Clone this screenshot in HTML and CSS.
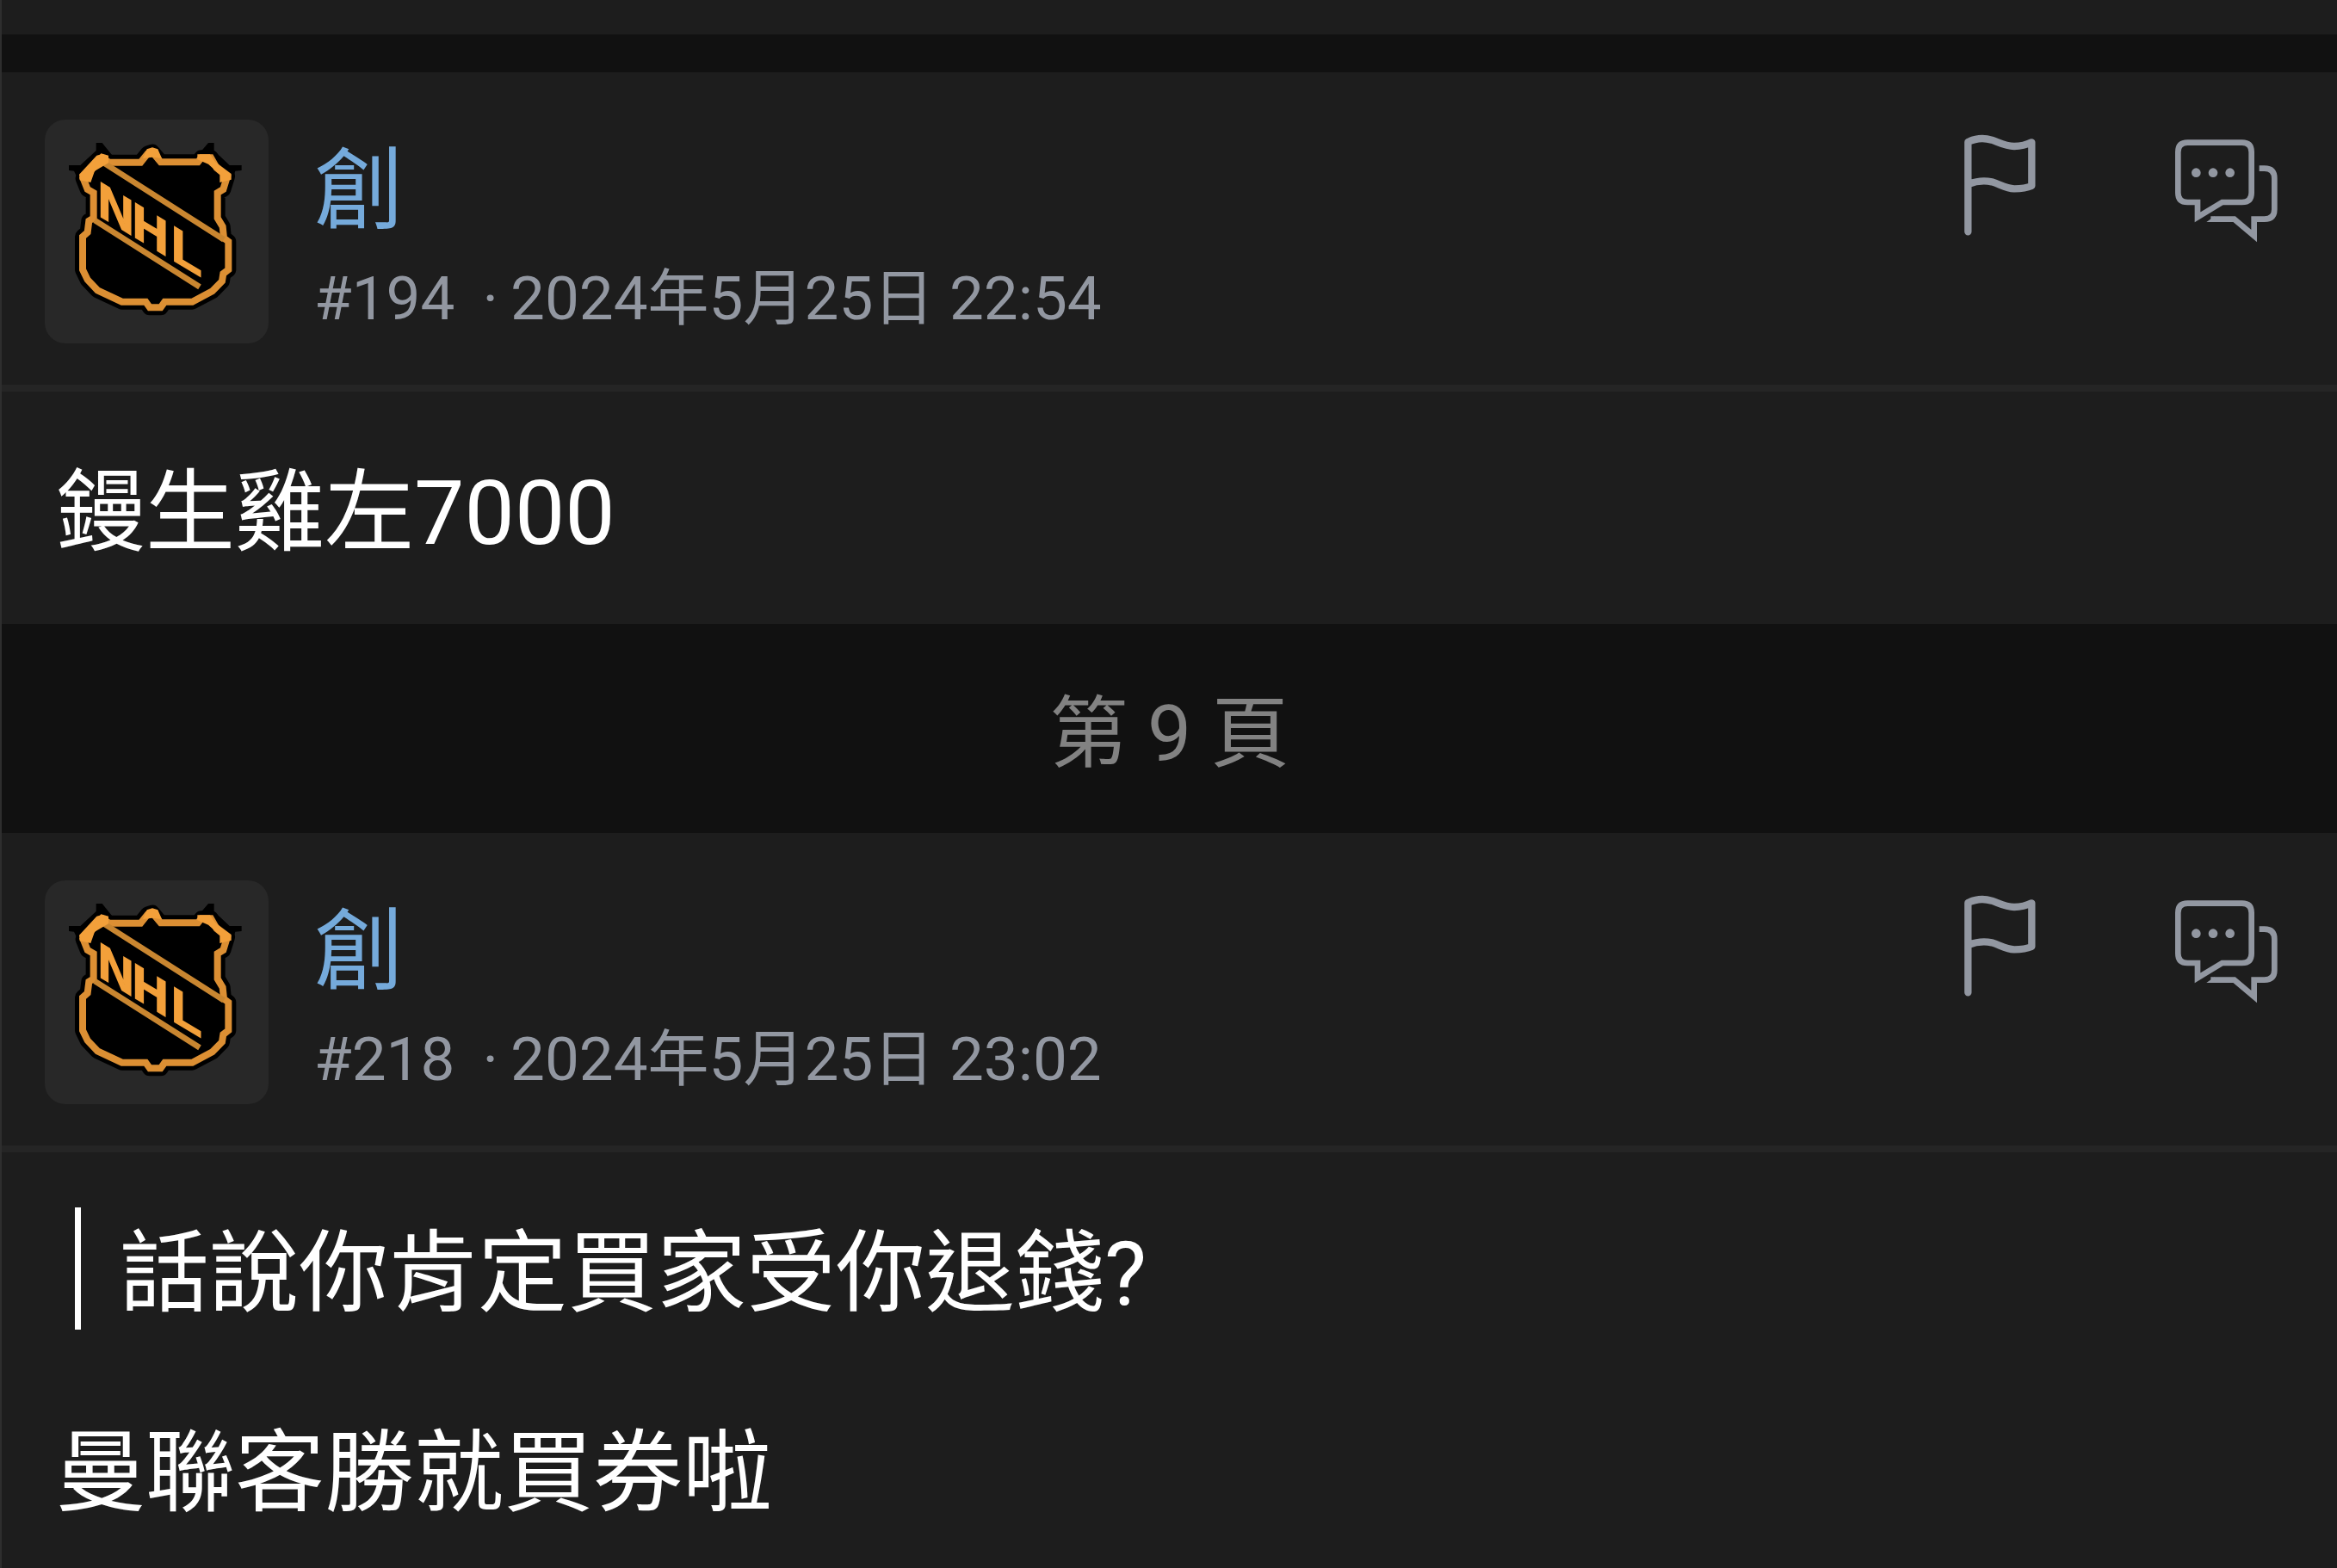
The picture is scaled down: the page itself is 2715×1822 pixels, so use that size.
FILE: index.html
```
<!DOCTYPE html>
<html lang="zh-Hant">
<head>
  <meta charset="UTF-8">
  <title>第 9 頁</title>
  <link rel="stylesheet" href="styles.css">
</head>
<body>

  <!-- shared drawings -->
  <svg class="sprites" aria-hidden="true">
    <symbol id="flag" viewBox="120 75 258 360">
      <path d="M139 418V105C165 92 195 90 222 98C250 108 270 120 300 120C325 120 345 114 361 106V258C345 265 325 268 300 268C270 266 250 252 222 244C195 238 165 242 139 252" fill="none" stroke="currentColor" stroke-width="25" stroke-linecap="round" stroke-linejoin="round"/>
    </symbol>
    <symbol id="replies" viewBox="852 90 372 366">
      <path d="M904 107H1094Q1127 107 1127 140V282Q1127 315 1094 315H1025L939 367V315H904Q871 315 871 282V140Q871 107 904 107Z" fill="none" stroke="currentColor" stroke-width="20"/>
      <path d="M1154 197H1172Q1207 197 1207 232V340Q1207 374 1172 374H1136V432L1067 374H985" fill="none" stroke="currentColor" stroke-width="20"/>
      <path d="M970 384L998 364V384Z" fill="currentColor"/>
      <g fill="currentColor">
        <circle cx="934" cy="212" r="16"/>
        <circle cx="993" cy="212" r="16"/>
        <circle cx="1052" cy="212" r="16"/>
      </g>
    </symbol>
    <symbol id="shield" viewBox="66 57 780 780">
      <path d="M245 138H266L300 180L210 262H180L168 236L150 234V216H190L245 165ZM656 138H636L600 180L690 262H722L730 236L752 234V216H710L656 165Z"/>
      <path d="M441 170L470 205H600L612 190H645L665 225L702 255L688 300L668 312V400L686 430L690 470L706 482V580L688 594L684 620L650 655L580 692H484L470 712H432L418 692H335L250 652L215 615L198 580V465L215 450L220 410L236 400V312L215 300L200 262L235 225L265 190L290 206H400L425 175Z" fill="#000" stroke="#000" stroke-width="54" stroke-linejoin="round"/>
      <path d="M441 170L470 205H600L612 190H645L665 225L702 255L688 300L668 312V400L686 430L690 470L706 482V580L688 594L684 620L650 655L580 692H484L470 712H432L418 692H335L250 652L215 615L198 580V465L215 450L220 410L236 400V312L215 300L200 262L235 225L265 190L290 206H400L425 175Z" fill="#000" stroke="#dc8f33" stroke-width="24"/>
      <path d="M275 210L690 475M240 408L606 640" fill="none" stroke="#c98630" stroke-width="20"/>
      <g fill="#f3a03a">
        <path d="M422 160L441 154L460 160L474 192L441 188L408 192ZM247 182L268 176L288 182V208L240 236L226 276L188 268L186 248ZM598 178H642L660 204L716 246V266L676 276V248L636 212L598 196Z"/>
        <text class="shield-text" transform="skewY(31)" x="252 372 508" y="238 238 238">NHL</text>
      </g>
    </symbol>
  </svg>

  <main class="thread">
    <div class="post-end"></div>

    <article class="post">
      <header class="post-header">
        <svg class="avatar" role="img" aria-label="創"><use href="#shield"/></svg>
        <div class="author">
          <a class="name" href="#">創</a>
          <div class="meta"><span>#194</span><span class="dot">·</span><time datetime="2024-05-25T22:54">2024年5月25日 22:54</time></div>
        </div>
        <div class="actions">
          <button type="button" aria-label="舉報"><svg class="icon-flag"><use href="#flag"/></svg></button>
          <button type="button" aria-label="回覆"><svg class="icon-replies"><use href="#replies"/></svg></button>
        </div>
      </header>
      <div class="post-body">
        <p>鏝生雞左7000</p>
      </div>
    </article>

    <div class="page-label">第 9 頁</div>

    <article class="post">
      <header class="post-header">
        <svg class="avatar" role="img" aria-label="創"><use href="#shield"/></svg>
        <div class="author">
          <a class="name" href="#">創</a>
          <div class="meta"><span>#218</span><span class="dot">·</span><time datetime="2024-05-25T23:02">2024年5月25日 23:02</time></div>
        </div>
        <div class="actions">
          <button type="button" aria-label="舉報"><svg class="icon-flag"><use href="#flag"/></svg></button>
          <button type="button" aria-label="回覆"><svg class="icon-replies"><use href="#replies"/></svg></button>
        </div>
      </header>
      <div class="post-body">
        <blockquote>話說你肯定買家受你退錢?</blockquote>
        <p>曼聯客勝就買券啦</p>
      </div>
    </article>
  </main>

</body>
</html>
```

FILE: styles.css
```
html {
  box-sizing: border-box;
  background: #1d1d1d;
}

*, *:before, *:after {
  box-sizing: inherit;
}

body {
  margin: 0;
  font-family: Roboto, "Noto Sans CJK TC", sans-serif;
  color: #fff;
}

.sprites {
  display: none;
}

.thread {
  border-left: 2px solid #2e2e2e;
}

/* tail of the previous post and the gap under it */
.post-end {
  height: 84px;
  border-bottom: 44px solid #111;
}

.post-header {
  display: flex;
  align-items: flex-start;
  padding: 55px 67px 40px 50px;
  border-bottom: 8px solid #252525;
}

.avatar {
  width: 260px;
  height: 260px;
  flex: none;
  border-radius: 24px;
  background: #282828;
}

.shield-text {
  font-family: "Liberation Sans Narrow", "Liberation Sans", sans-serif;
  font-weight: bold;
  font-size: 172px;
  stroke: #f3a03a;
  stroke-width: 6px;
}

.author {
  flex: 1;
  padding: 20px 0 0 53px;
}

.name {
  display: block;
  width: fit-content;
  font-size: 104px;
  line-height: 128px;
  color: #75aadb;
  text-decoration: none;
}

.meta {
  display: flex;
  gap: 14px;
  font-size: 71px;
  line-height: 120px;
  color: #9297a1;
}

.dot {
  margin-left: 18px;
}

.actions {
  display: flex;
  gap: 158px;
  padding-top: 16px;
}

.actions button {
  display: flex;
  align-items: flex-start;
  padding: 0;
  border: 0;
  background: none;
  color: #9297a1;
  cursor: pointer;
}

.icon-flag {
  width: 86px;
  height: 120px;
}

.icon-replies {
  width: 124px;
  height: 132px;
}

.post-body {
  padding: 64px 63px;
  font-size: 104px;
  line-height: 128px;
}

.post-body p {
  margin: 0;
  padding-top: 14px;
}

.post-body blockquote {
  margin: 0 0 90px 22px;
  padding: 14px 0 0 45px;
  border-left: 7px solid #fff;
}

.page-label {
  padding: 64px 0 51px;
  background: #111;
  color: #828282;
  font-size: 91px;
  line-height: 128px;
  text-align: center;
}
```
